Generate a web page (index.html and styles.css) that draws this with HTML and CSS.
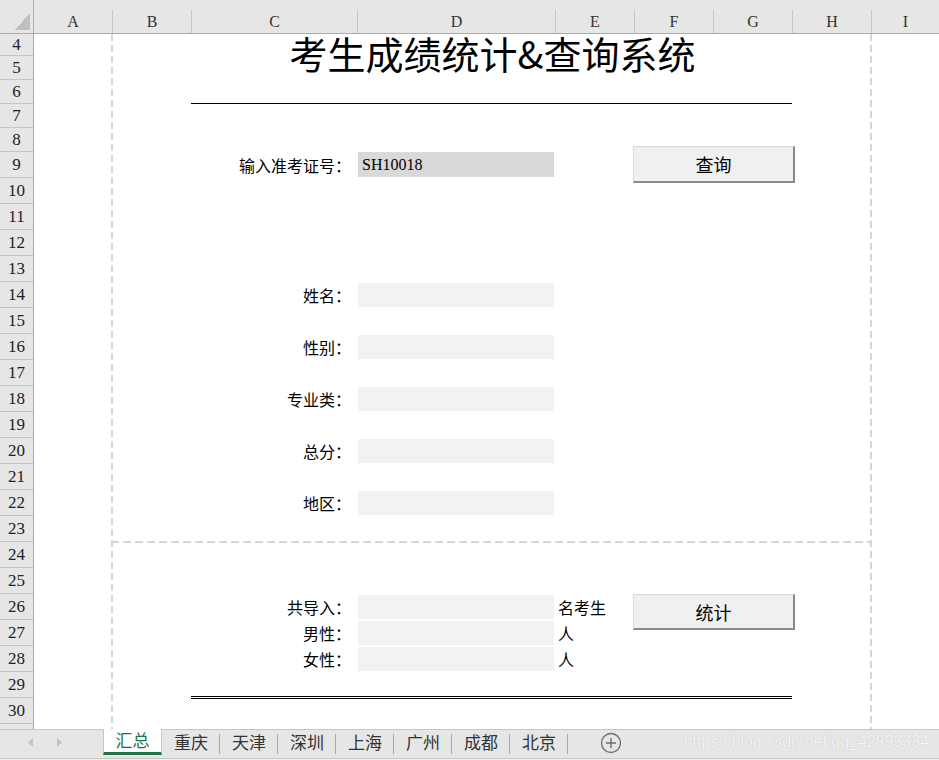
FILE: index.html
```html
<!DOCTYPE html>
<html lang="zh-CN">
<head>
<meta charset="utf-8">
<title>考生成绩统计&查询系统</title>
<link rel="stylesheet" href="styles.css">
</head>
<body>
<div class="app">
  <div class="colhdr">
    <div class="corner"><span class="tri"></span></div>
    <div class="ch c79">A</div>
    <div class="ch c79">B</div>
    <div class="ch c166">C</div>
    <div class="ch c198">D</div>
    <div class="ch c79">E</div>
    <div class="ch c79">F</div>
    <div class="ch c79">G</div>
    <div class="ch c79">H</div>
    <div class="ch rest">I</div>
  </div>
  <div class="main">
    <div class="rowhdr">
      <div class="rh h22">4</div>
      <div class="rh h24">5</div>
      <div class="rh h24">6</div>
      <div class="rh h24">7</div>
      <div class="rh h24">8</div>
      <div class="rh h26">9</div>
      <div class="rh h26">10</div>
      <div class="rh h26">11</div>
      <div class="rh h26">12</div>
      <div class="rh h26">13</div>
      <div class="rh h26">14</div>
      <div class="rh h26">15</div>
      <div class="rh h26">16</div>
      <div class="rh h26">17</div>
      <div class="rh h26">18</div>
      <div class="rh h26">19</div>
      <div class="rh h26">20</div>
      <div class="rh h26">21</div>
      <div class="rh h26">22</div>
      <div class="rh h26">23</div>
      <div class="rh h26">24</div>
      <div class="rh h26">25</div>
      <div class="rh h26">26</div>
      <div class="rh h26">27</div>
      <div class="rh h26">28</div>
      <div class="rh h26">29</div>
      <div class="rh h26">30</div>
      <div class="rh hrest"></div>
    </div>
    <div class="sheet">
      <div class="page"></div>
      <div class="pagebreak"></div>

      <div class="title">考生成绩统计&amp;查询系统</div>
      <div class="rule"></div>

      <div class="label r9">输入准考证号：</div>
      <div class="field dark r9">SH10018</div>
      <div class="btn btn-query">查询</div>

      <div class="label r14">姓名：</div>
      <div class="field r14"></div>
      <div class="label r16">性别：</div>
      <div class="field r16"></div>
      <div class="label r18">专业类：</div>
      <div class="field r18"></div>
      <div class="label r20">总分：</div>
      <div class="field r20"></div>
      <div class="label r22">地区：</div>
      <div class="field r22"></div>

      <div class="label r26">共导入：</div>
      <div class="field r26"></div>
      <div class="suffix r26">名考生</div>
      <div class="btn btn-stat">统计</div>
      <div class="label r27">男性：</div>
      <div class="field r27"></div>
      <div class="suffix r27">人</div>
      <div class="label r28">女性：</div>
      <div class="field r28"></div>
      <div class="suffix r28">人</div>

      <div class="dbl"></div>
    </div>
  </div>
  <div class="tabbar">
    <div class="nav">
      <svg width="6" height="9" viewBox="0 0 6 9"><path d="M5 0 L0 4.5 L5 9 Z" fill="#c3c3c3"/></svg>
      <svg width="6" height="9" viewBox="0 0 6 9"><path d="M1 0 L6 4.5 L1 9 Z" fill="#c3c3c3"/></svg>
    </div>
    <div class="tab active">汇总</div>
    <div class="tab">重庆</div>
    <div class="tab">天津</div>
    <div class="tab">深圳</div>
    <div class="tab">上海</div>
    <div class="tab">广州</div>
    <div class="tab">成都</div>
    <div class="tab">北京</div>
    <div class="add">
      <svg width="22" height="22" viewBox="0 0 22 22"><circle cx="11" cy="11" r="9.5" fill="none" stroke="#6e6e6e" stroke-width="1.3"/><path d="M11 6 V16 M6 11 H16" stroke="#6e6e6e" stroke-width="1.4"/></svg>
    </div>
    <div class="watermark">https://blog.csdn.net/qq_42893334</div>
  </div>
</div>
</body>
</html>
```

FILE: styles.css
```css
html, body {
  margin: 0;
  padding: 0;
}
body {
  width: 939px;
  height: 760px;
  overflow: hidden;
  background: #f0f0f0;
  font-family: "Noto Sans CJK SC", "Noto Sans", sans-serif;
  color: #000;
}
.app {
  display: flex;
  flex-direction: column;
  width: 939px;
  height: 760px;
}

/* column header */
.colhdr {
  display: flex;
  align-items: flex-end;
  height: 34px;
  box-sizing: border-box;
  background: #e6e6e6;
  border-bottom: 1px solid #ababab;
  flex: none;
}
.corner {
  width: 34px;
  height: 33px;
  box-sizing: border-box;
  border-right: 1px solid #ababab;
  display: flex;
  align-items: flex-end;
  justify-content: flex-end;
  padding: 0 3px 3px 0;
  flex: none;
}
.tri {
  width: 15px;
  height: 17px;
  background: linear-gradient(to bottom right, transparent 50%, #c0c0c0 50%);
}
.ch {
  height: 23px;
  box-sizing: border-box;
  border-right: 1px solid #c6c6c6;
  font-family: "Liberation Serif", serif;
  font-size: 16px;
  color: #333;
  display: flex;
  align-items: center;
  justify-content: center;
  flex: none;
}
.c79 { width: 79px; }
.c166 { width: 166px; }
.c198 { width: 198px; }
.ch.rest { flex: 1; border-right: 0; }

/* main area */
.main {
  display: flex;
  height: 695px;
  flex: none;
}
.rowhdr {
  width: 34px;
  box-sizing: border-box;
  background: #e6e6e6;
  border-right: 1px solid #ababab;
  display: flex;
  flex-direction: column;
  flex: none;
}
.rh {
  box-sizing: border-box;
  border-bottom: 1px solid #c6c6c6;
  font-family: "Liberation Serif", serif;
  font-size: 17px;
  color: #222;
  display: flex;
  align-items: center;
  justify-content: center;
  flex: none;
}
.h22 { height: 22px; }
.h24 { height: 24px; }
.h26 { height: 26px; }
.hrest { flex: 1; border-bottom: 0; }

.sheet {
  flex: 1;
  background: #fff;
  display: grid;
  grid-template-columns: 79px 79px 166px 198px 79px 79px 79px 79px 1fr;
  grid-template-rows: 22px repeat(4, 24px) repeat(22, 26px) 1fr;
}

.page {
  grid-column: 2 / 9;
  grid-row: 1 / -1;
  margin-left: -2px;
  background:
    repeating-linear-gradient(to bottom, #d6d6d6 0 7px, transparent 7px 11px) left top / 2px 100% no-repeat,
    repeating-linear-gradient(to bottom, #d6d6d6 0 7px, transparent 7px 11px) right top / 2px 100% no-repeat;
}
.pagebreak {
  grid-column: 2 / 9;
  grid-row: 21;
  align-self: start;
  height: 2px;
  margin: -1px 1px 0 -2px;
  background: repeating-linear-gradient(to right, #d6d6d6 0 8px, transparent 8px 12px);
}

.title {
  grid-column: 3 / 8;
  grid-row: 1 / 3;
  display: flex;
  align-items: center;
  justify-content: center;
  font-size: 38px;
  line-height: 1;
  padding-bottom: 8px;
  white-space: nowrap;
}
.rule {
  grid-column: 3 / 8;
  grid-row: 3;
  align-self: end;
  margin-left: -1px;
  margin-right: 1px;
  border-bottom: 1px solid #000;
}

.label {
  grid-column: 3;
  display: flex;
  align-items: center;
  justify-content: flex-end;
  padding-right: 7px;
  font-size: 16px;
  white-space: nowrap;
}
.field {
  grid-column: 4;
  margin: 1px 2px 1px 0;
  background: #f2f2f2;
  display: flex;
  align-items: center;
}
.field.dark {
  background: #d9d9d9;
  margin-top: 0;
  padding-left: 4px;
  font-family: "Liberation Serif", serif;
  font-size: 16px;
}
.suffix {
  grid-column: 5;
  display: flex;
  align-items: center;
  padding-left: 2px;
  font-size: 16px;
  white-space: nowrap;
}
.r9 { grid-row: 6; }
.r14 { grid-row: 11; }
.r16 { grid-row: 13; }
.r18 { grid-row: 15; }
.r20 { grid-row: 17; }
.r22 { grid-row: 19; }
.r26 { grid-row: 23; }
.r27 { grid-row: 24; }
.r28 { grid-row: 25; }

.btn {
  grid-column: 6 / 8;
  align-self: start;
  width: 162px;
  margin-left: -2px;
  box-sizing: border-box;
  background: #f0f0f0;
  border-top: 1px solid #dadada;
  border-left: 1px solid #dadada;
  border-right: 2px solid #8a8a8a;
  border-bottom: 2px solid #8a8a8a;
  display: flex;
  align-items: center;
  justify-content: center;
  font-size: 18px;
}
.btn-query {
  grid-row: 5 / 8;
  margin-top: 18px;
  height: 37px;
}
.btn-stat {
  grid-row: 23 / 25;
  height: 36px;
}

.dbl {
  grid-column: 3 / 8;
  grid-row: 26;
  align-self: end;
  margin: 0 1px -1px -1px;
  border-bottom: 3px double #000;
}

/* sheet tabs */
.tabbar {
  height: 30px;
  box-sizing: border-box;
  background: #e6e6e6;
  border-top: 1px solid #c6c6c6;
  border-bottom: 1px solid #c6c6c6;
  display: flex;
  align-items: stretch;
  flex: none;
}
.nav {
  width: 103px;
  display: flex;
  align-items: center;
  gap: 22px;
  padding-left: 28px;
  padding-bottom: 3px;
  box-sizing: border-box;
  flex: none;
}
.tab {
  width: 58px;
  flex: none;
  display: flex;
  align-items: center;
  justify-content: center;
  padding-bottom: 6px;
  box-sizing: border-box;
  font-size: 17px;
  color: #333;
  background: linear-gradient(#a8a8a8, #a8a8a8) right 4px / 1px 20px no-repeat;
}
.tab.active {
  width: 59px;
  height: 26px;
  margin-top: -1px;
  background: #fff;
  color: #217346;
  border-left: 1px solid #c6c6c6;
  border-right: 1px solid #c6c6c6;
  border-bottom: 3px solid #217346;
  padding-bottom: 2px;
}
.add {
  display: flex;
  align-items: center;
  margin-left: 32px;
  padding-bottom: 2px;
}
.watermark {
  margin-left: auto;
  padding-right: 10px;
  padding-bottom: 4px;
  display: flex;
  align-items: center;
  font-family: "Liberation Sans", Arial, sans-serif;
  font-size: 16px;
  color: #f6f6f6;
  text-shadow: 0 0 1px #b5b5b5;
  white-space: nowrap;
}
```
